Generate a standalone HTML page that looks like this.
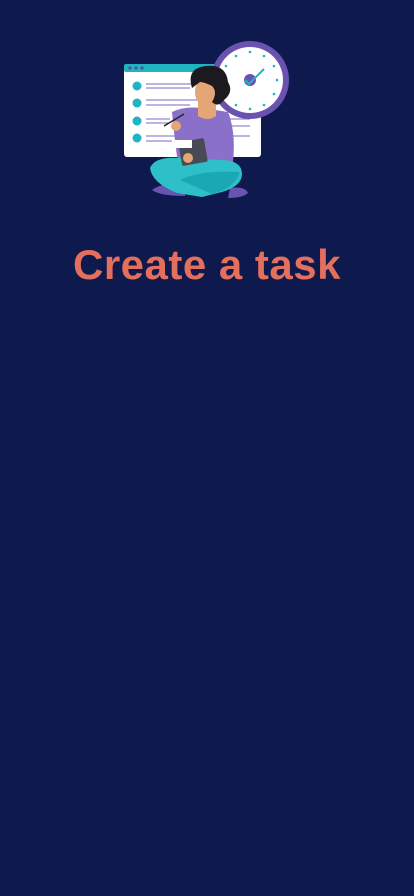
<!DOCTYPE html>
<html><head><meta charset="utf-8"><style>
html,body{margin:0;padding:0;background:#0e1a4d;width:414px;height:896px;overflow:hidden}
h1{position:absolute;left:0;width:414px;top:241px;margin:0;text-align:center;font-family:"Liberation Sans",sans-serif;font-weight:bold;font-size:42px;color:#e46f5c;letter-spacing:0.5px}
svg{position:absolute;left:0;top:0}
</style></head><body>
<svg width="414" height="230" viewBox="0 0 414 230">
<rect x="124" y="64" width="137" height="93" rx="3" fill="#fff"/>
<rect x="124" y="64" width="137" height="8" rx="2" fill="#1fb5c0"/>
<circle cx="130" cy="68" r="1.6" fill="#5a4aa0"/><circle cx="136" cy="68" r="1.6" fill="#5a4aa0"/><circle cx="142" cy="68" r="1.6" fill="#5a4aa0"/>
<g fill="#1fb5c0"><circle cx="137" cy="86" r="4.5"/><circle cx="137" cy="103" r="4.5"/><circle cx="137" cy="121" r="4.5"/><circle cx="137" cy="138" r="4.5"/></g>
<g stroke="#7b6bbf" stroke-width="1"><line x1="146" y1="84" x2="200" y2="84"/><line x1="146" y1="88" x2="190" y2="88"/><line x1="146" y1="100" x2="200" y2="100"/><line x1="146" y1="105" x2="190" y2="105"/><line x1="146" y1="119" x2="170" y2="119"/><line x1="146" y1="123" x2="170" y2="123"/><line x1="146" y1="136" x2="180" y2="136"/><line x1="146" y1="141" x2="180" y2="141"/><line x1="230" y1="119" x2="250" y2="119"/><line x1="230" y1="126" x2="250" y2="126"/><line x1="230" y1="136" x2="250" y2="136"/></g>
<circle cx="250" cy="80" r="39" fill="#6a52b0"/>
<circle cx="250" cy="80" r="33" fill="#fff"/>
<g fill="#1fb5c0"><circle cx="250" cy="52" r="1.3"/><circle cx="264" cy="56" r="1.3"/><circle cx="274" cy="66" r="1.3"/><circle cx="277" cy="80" r="1.3"/><circle cx="274" cy="94" r="1.3"/><circle cx="264" cy="105" r="1.3"/><circle cx="250" cy="109" r="1.3"/><circle cx="236" cy="105" r="1.3"/><circle cx="226" cy="94" r="1.3"/><circle cx="226" cy="66" r="1.3"/><circle cx="236" cy="56" r="1.3"/></g>
<circle cx="250" cy="80" r="6" fill="#6a52b0"/>
<path d="M245 80l4 4 15-15" stroke="#1fb5c0" stroke-width="2" fill="none"/>
<path d="M152 190q10-8 35-6l-2 12q-25 0-33-6z" fill="#6a52b0"/>
<path d="M230 188q15-2 18 5q-5 5-20 5z" fill="#6a52b0"/>
<path d="M172 112q12-6 30-4l26 4q8 20 5 50l-55 2q-4-30-6-52z" fill="#8a70c8"/>
<path d="M150 168q5-12 30-10l40 2q22 0 22 14q0 12-20 18l-20 5-25-4q-25-10-27-25z" fill="#2ec0c8"/>
<path d="M180 180q20-10 60-8q-5 16-28 22z" fill="#1aa8b5"/>
<rect x="180" y="140" width="26" height="24" rx="2" transform="rotate(-10 193 152)" fill="#4a4a55"/>
<rect x="172" y="140" width="20" height="8" fill="#fff"/>
<path d="M198 92h18v24q-8 6-18 0z" fill="#e4a676"/>
<ellipse cx="207" cy="92" rx="12" ry="15" fill="#e4a676"/>
<path d="M192 88q-6-20 14-22q20-2 22 16q6 10-4 18q-6 8-12 2q6-10 0-16q-8-4-12-4z" fill="#1c1a1f"/>
<path d="M164 126l20-12" stroke="#222" stroke-width="1.5"/>
<circle cx="176" cy="126" r="5" fill="#e4a676"/>
<circle cx="188" cy="158" r="5" fill="#e4a676"/>
</svg>
<h1>Create a task</h1>
</body></html>
